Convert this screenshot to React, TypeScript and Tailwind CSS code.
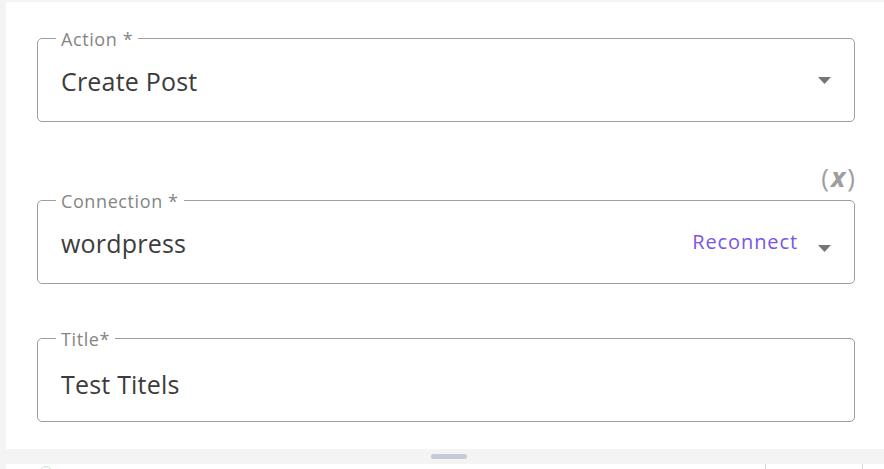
import React from 'react';

const font = { fontFamily: '"Open Sans", "Noto Sans", sans-serif' };

function Arrow({ className = '' }: { className?: string }) {
  return (
    <svg width="13" height="7" viewBox="0 0 13 7" className={'shrink-0 ' + className}>
      <path d="M0 0 L13 0 L6.5 7 Z" fill="#757575" />
    </svg>
  );
}

function Field({
  label,
  value,
  select,
  extra,
  arrowClass,
  valueClass = '',
}: {
  label: string;
  value: string;
  select?: boolean;
  extra?: React.ReactNode;
  arrowClass?: string;
  valueClass?: string;
}) {
  return (
    <fieldset className="rounded-[5px] border border-[#9e9e9e]">
      <legend className="ml-[18px] px-[5px] pt-[2px] text-[18px] leading-[18px] tracking-[0.6px] text-[#858585]">{label}</legend>
      <div className="flex h-[73px] items-center px-[23px] pb-[8px]">
        <div className={'flex-1 text-[25px] leading-[30px] tracking-[0.2px] text-[#3c3c3c] ' + valueClass}>{value}</div>
        {extra}
        {select && <Arrow className={arrowClass} />}
      </div>
    </fieldset>
  );
}

export default function App() {
  return (
    <div className="h-[469px] overflow-hidden bg-[#f4f4f4]" style={font}>
      <div className="ml-[6px] mt-[2px] bg-white pl-[31px] pr-[29px] pt-[26px] pb-[27px]">
        <Field label="Action *" value="Create Post" select />

        <div className="mt-[42px] flex h-[26px] items-center justify-end">
          <span className="mr-[-2px] text-[26px] leading-[26px] tracking-[2px] text-[#9e9e9e]">
            (<span className="text-[27px] font-bold italic">x</span>)
          </span>
        </div>

        <Field
          label="Connection *"
          value="wordpress"
          select
          arrowClass="mt-[12px]"
          extra={<span className="mr-[20px] mt-[-1px] text-[20px] tracking-[0.9px] text-[#7a55e8]">Reconnect</span>}
        />

        <div className="mt-[44px]">
          <Field label="Title*" value="Test Titels" valueClass="pt-[6px]" />
        </div>
      </div>

      <div className="h-[15px] pl-[431px] pt-[5px]">
        <div className="h-[5px] w-[36px] rounded-full bg-[#c5cad6]" />
      </div>

      <div className="ml-[6px] flex h-[10px] bg-white">
        <div className="ml-[34px] mt-[2px] h-[12px] w-[12px] rounded-full border border-[#bfe8cc]" />
        <div className="ml-[713px] h-full w-px bg-[#d6d6d6]" />
        <div className="ml-[96px] h-full w-px bg-[#d6d6d6]" />
      </div>
    </div>
  );
}
